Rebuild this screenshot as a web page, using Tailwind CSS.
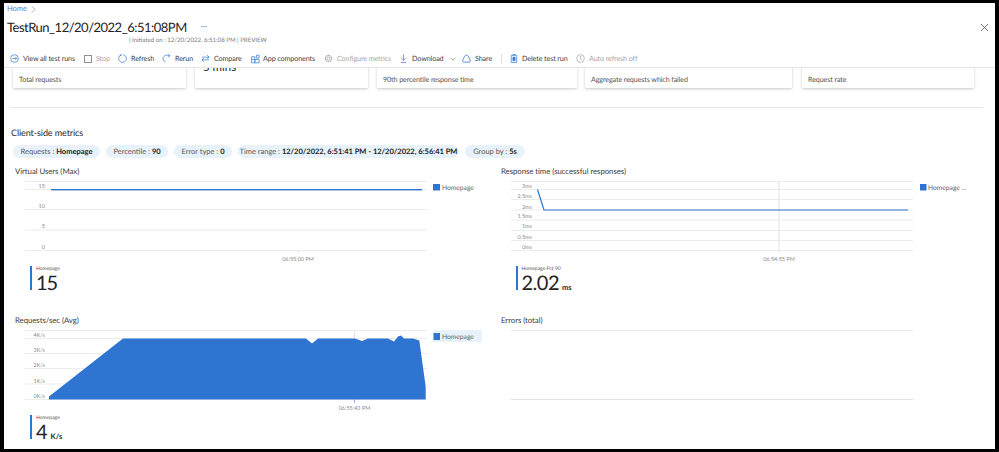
<!DOCTYPE html>
<html lang="en">
<head>
    <meta charset="UTF-8">
    <title>TestRun</title>
    <script src="https://cdn.jsdelivr.net/npm/@tailwindcss/browser@4"></script>
</head>
<body class="bg-black w-[999px] h-[452px] overflow-hidden font-['Lato',sans-serif] [text-rendering:geometricPrecision] text-[#323130]">
    <div class="ml-[4px] mt-[3px] w-[991px] h-[446px] bg-white overflow-hidden flex flex-col">
        <!-- Header -->
        <div class="h-[48px] shrink-0 relative">
            <div class="flex items-center gap-[4px] pl-[3px] h-[12px] text-[7.5px] text-[#4f83c9]">
                Home
                <svg class="w-[5px] h-[7px]" viewBox="0 0 5 7" fill="none" stroke="#8a8886" stroke-width=".7"><path d="M1 .5 4 3.5 1 6.5"/></svg>
            </div>
            <div class="flex items-center pl-[3px] h-[20px] mt-[2px]">
                <h1 class="text-[13px] leading-[20px] tracking-[-0.5px] text-[#252423]">TestRun_12/20/2022_6:51:08PM</h1>
                <span class="ml-[14px] text-[8px] text-[#777] -mt-[2px]">···</span>
            </div>
            <div class="pl-[125px] text-[6.1px] leading-[8px] text-[#7a7a7a]">| Initiated on : 12/20/2022, 6:51:08 PM | PREVIEW</div>
            <svg class="absolute left-[976px] top-[20px] w-[9px] h-[9px]" viewBox="0 0 9 9" fill="none" stroke="#555" stroke-width=".8"><path d="M1 1 8 8M8 1 1 8"/></svg>
        </div>

        <!-- Toolbar -->
        <div class="h-[17px] shrink-0 flex items-start pl-[6px] pt-[2px] text-[7.2px] tracking-[-0.12px] leading-[11px] text-[#444] border-b border-[#e6e6e6] relative z-10 bg-white">
            <div class="flex items-center gap-[4px] w-[74px]">
                <svg class="w-[9px] h-[9px] shrink-0" viewBox="0 0 10 10" fill="none" stroke="#3b7bd0" stroke-width=".8"><circle cx="5" cy="5" r="4.3"/><path d="M2.5 5h5M5.6 3 7.6 5 5.6 7"/></svg>
                <span>View all test runs</span>
            </div>
            <div class="flex items-center gap-[4px] w-[34px] text-[#a6a6a6]">
                <span class="w-[8px] h-[8px] border border-[#8f8f8f] shrink-0"></span>
                <span>Stop</span>
            </div>
            <div class="flex items-center gap-[4px] w-[44px]">
                <svg class="w-[9px] h-[9px] shrink-0" viewBox="0 0 10 10" fill="none" stroke="#3b7bd0" stroke-width=".8"><path d="M3.4 1A4.3 4.3 0 1 0 6 .8M3.6 .1V1.6H1.9"/></svg>
                <span>Refresh</span>
            </div>
            <div class="flex items-center gap-[4px] w-[39px]">
                <svg class="w-[9px] h-[9px] shrink-0" viewBox="0 0 10 10" fill="none" stroke="#3b7bd0" stroke-width=".8"><path d="M8.8 2.2C6.5.6 2.6 1 1.4 3.8c-.7 1.800.2 4 2.600 5M7 .3 8.900 2.200 6.800 3.500"/></svg>
                <span>Rerun</span>
            </div>
            <div class="flex items-center gap-[4px] w-[50px]">
                <svg class="w-[9px] h-[9px] shrink-0" viewBox="0 0 10 10" fill="none" stroke="#3b7bd0" stroke-width=".8"><path d="M1 3.500H9M6.800 1.200 9 3.500 6.800 5M9 6.500H1M3.200 4.800 1 6.500 3.200 8.800"/></svg>
                <span>Compare</span>
            </div>
            <div class="flex items-center gap-[3px] w-[73px]">
                <svg class="w-[9px] h-[10px] shrink-0" viewBox="0 0 10 10" fill="none" stroke="#3b7bd0" stroke-width=".8"><path d="M.7 2.500H4.300V9.300H.7ZM4.300 5.500H9V9.300H4.300ZM.7 5.500H4.300"/><path d="M6 .7H9V4H6Z"/></svg>
                <span>App components</span>
            </div>
            <div class="flex items-center gap-[4px] w-[76px] text-[#a6a6a6]">
                <svg class="w-[9px] h-[9px] shrink-0" viewBox="0 0 10 10" fill="none" stroke="#a6a6a6" stroke-width=".8"><circle cx="5" cy="5" r="1.500"/><circle cx="5" cy="5" r="3.400" stroke-dasharray="1.500 .6" stroke-width="1.500"/></svg>
                <span>Configure metrics</span>
            </div>
            <div class="flex items-center gap-[5px] w-[62px]">
                <svg class="w-[7px] h-[9px] shrink-0" viewBox="0 0 7 10" fill="none" stroke="#3b7bd0" stroke-width=".8"><path d="M3.500 .5V7M1 4.500 3.500 7 6 4.500M.5 9.300H6.500"/></svg>
                <span>Download</span>
                <svg class="w-[6px] h-[4px] ml-[1px] shrink-0" viewBox="0 0 6 4" fill="none" stroke="#666" stroke-width=".6"><path d="M.5 .7 3 3.300 5.500 .7"/></svg>
            </div>
            <div class="flex items-center gap-[4px] w-[39px]">
                <svg class="w-[9px] h-[9px] shrink-0" viewBox="0 0 10 10" fill="none" stroke="#3b7bd0" stroke-width=".9"><path d="M3 2.500A2.300 2.300 0 0 1 7 2.500L9.400 7.500A1.500 1.500 0 0 1 8 9H2A1.500 1.500 0 0 1 .6 7.500Z"/></svg>
                <span>Share</span>
            </div>
            <div class="w-[1px] h-[9px] bg-[#ddd] mr-[8px] mt-[1px]"></div>
            <div class="flex items-center gap-[4px] w-[66px]">
                <svg class="w-[8px] h-[9px] shrink-0" viewBox="0 0 8 10" fill="none" stroke="#3b7bd0" stroke-width=".8"><path d="M1 1.500H7V9.500H1ZM2.800 1.500V.5H5.200V1.500"/><path d="M2.800 3.500H5.200V7.500H2.800Z" fill="#3b7bd0"/></svg>
                <span>Delete test run</span>
            </div>
            <div class="flex items-center gap-[4px] text-[#a6a6a6]">
                <svg class="w-[9px] h-[9px] shrink-0" viewBox="0 0 10 10" fill="none" stroke="#a6a6a6" stroke-width=".8"><circle cx="5" cy="5" r="4.300"/><path d="M5 2.300V5.300L6.800 6.500"/></svg>
                <span>Auto refresh off</span>
            </div>
        </div>

        <!-- Scrolled content -->
        <div class="flex-1 overflow-hidden">
            <!-- Summary cards, scrolled under the toolbar -->
            <div class="flex pl-[9px] -mt-[20px] text-[7.2px] tracking-[-0.12px] text-[#555]">
                <div class="w-[173px] h-[40px] mr-[9px] rounded-[1px] shadow-[0_1px_3px_rgba(0,0,0,.22)] px-[6px] pt-[26px] leading-[11px]">Total requests</div>
                <div class="w-[173px] h-[40px] mr-[9px] rounded-[1px] shadow-[0_1px_3px_rgba(0,0,0,.22)] relative">
                    <span class="absolute left-[8px] top-[13px] text-[11.5px] tracking-normal leading-[14px] text-[#252423]">5 mins</span>
                </div>
                <div class="w-[200px] h-[40px] mr-[8px] rounded-[1px] shadow-[0_1px_3px_rgba(0,0,0,.22)] px-[6px] pt-[26px] leading-[11px]">90th percentile response time</div>
                <div class="w-[207px] h-[40px] mr-[10px] rounded-[1px] shadow-[0_1px_3px_rgba(0,0,0,.22)] px-[6px] pt-[26px] leading-[11px]">Aggregate requests which failed</div>
                <div class="w-[172px] h-[40px] rounded-[1px] shadow-[0_1px_3px_rgba(0,0,0,.22)] px-[6px] pt-[26px] leading-[11px]">Request rate</div>
            </div>

            <div class="ml-[6px] w-[973px] h-[1px] bg-[#e6e6e6] mt-[19px]"></div>

            <div class="pl-[7px] mt-[19px] text-[9px] tracking-[-0.1px] leading-[12px] font-medium text-[#3a3a3a]">Client-side metrics</div>

            <!-- Filter pills -->
            <div class="flex gap-[6px] pl-[9px] mt-[6px] text-[7.5px] leading-[13px] text-[#555]">
                <div class="w-[87px] h-[13px] rounded-full bg-[#e8f2fa] text-center">Requests : <b class="text-[#252423]">Homepage</b></div>
                <div class="w-[62px] h-[13px] rounded-full bg-[#e8f2fa] text-center">Percentile : <b class="text-[#252423]">90</b></div>
                <div class="w-[58px] h-[13px] rounded-full bg-[#e8f2fa] text-center">Error type : <b class="text-[#252423]">0</b></div>
                <div class="w-[221px] h-[13px] rounded-full bg-[#e8f2fa] text-center">Time range : <b class="text-[#252423]">12/20/2022, 6:51:41 PM - 12/20/2022, 6:56:41 PM</b></div>
                <div class="w-[60px] h-[13px] rounded-full bg-[#e8f2fa] text-center">Group by : <b class="text-[#252423]">5s</b></div>
            </div>

            <!-- Charts -->
            <div class="grid grid-cols-[486px_486px] grid-rows-[149px_120px] mt-[7px] pl-[6px]">
                <!-- Virtual users -->
                <div>
                    <div class="pl-[5px] h-[13px] text-[7.8px] tracking-[-0.05px] leading-[12px] text-[#3a3a3a]">Virtual Users (Max)</div>
                    <svg class="block w-[486px] h-[88px] text-[5.5px]" viewBox="0 0 486 88" fill="#8a8a8a">
                        <path d="M15 3.500H417M15 11.500H417M15 31.500H417M15 52H417M15 72.500H417" stroke="#ececec"/>
                        <text x="35" y="10" text-anchor="end">15</text>
                        <text x="35" y="30" text-anchor="end">10</text>
                        <text x="35" y="50" text-anchor="end">5</text>
                        <text x="35" y="71" text-anchor="end">0</text>
                        <rect x="41" y="11" width="371" height="1.400" fill="#2f74d0"/>
                        <path d="M288 72.500V74" stroke="#ccc"/>
                        <text x="288" y="83" text-anchor="middle">06:55:00 PM</text>
                        <rect x="423" y="6" width="7" height="6.500" fill="#2f74d0"/>
                        <text x="432" y="11.500" class="text-[6.7px]" fill="#666">Homepage</text>
                    </svg>
                    <div class="ml-[20px] flex h-[24px] border-l-[2.500px] border-[#2f74d0] pl-[4px] flex-col">
                        <span class="text-[5px] leading-[6px] text-[#555]">Homepage</span>
                        <span class="text-[20px] leading-[18px] mt-[2px] tracking-[-1px] text-[#252423]">15</span>
                    </div>
                </div>

                <!-- Response time -->
                <div>
                    <div class="pl-[5px] h-[13px] text-[7.8px] tracking-[-0.05px] leading-[12px] text-[#3a3a3a]">Response time (successful responses)</div>
                    <svg class="block w-[486px] h-[88px] text-[5.5px]" viewBox="0 0 486 88" fill="#8a8a8a">
                        <path d="M15 3.500H417M15 11.500H417M15 21.500H417M15 32H417M15 42H417M15 52.500H417M15 62.500H417M15 72.500H417" stroke="#ececec"/>
                        <text x="36" y="10" text-anchor="end">3ms</text>
                        <text x="36" y="20" text-anchor="end">2.5ms</text>
                        <text x="36" y="30.500" text-anchor="end">2ms</text>
                        <text x="36" y="40" text-anchor="end">1.5ms</text>
                        <text x="36" y="50" text-anchor="end">1ms</text>
                        <text x="36" y="60.500" text-anchor="end">0.5ms</text>
                        <text x="36" y="71" text-anchor="end">0ms</text>
                        <path d="M283 3V75" stroke="#e2e2e2"/>
                        <path d="M41.500 11.500 48 32H412" fill="none" stroke="#2f74d0" stroke-width="1.200"/>
                        <text x="283" y="83" text-anchor="middle">06:54:55 PM</text>
                        <rect x="424" y="6" width="6.500" height="6.500" fill="#2f74d0"/>
                        <text x="432" y="11.500" class="text-[6.7px]" fill="#666">Homepage ...</text>
                    </svg>
                    <div class="ml-[20px] flex h-[24px] border-l-[2.500px] border-[#2f74d0] pl-[3.500px] flex-col">
                        <span class="text-[5px] leading-[6px] text-[#555]">Homepage Pct 90</span>
                        <div class="flex items-baseline gap-[3px] mt-[2px] text-[#252423]">
                            <span class="text-[20px] leading-[18px] tracking-[-0.5px]">2.02</span>
                            <span class="text-[7.5px] leading-[8px] font-bold">ms</span>
                        </div>
                    </div>
                </div>

                <!-- Requests per second -->
                <div>
                    <div class="pl-[5px] h-[13px] text-[7.8px] tracking-[-0.05px] leading-[12px] text-[#3a3a3a]">Requests/sec (Avg)</div>
                    <svg class="block w-[486px] h-[88px] text-[5.5px]" viewBox="0 0 486 88" fill="#8a8a8a">
                        <path d="M15 3.500H417M15 11.500H417M15 26.500H417M15 41.500H417M15 57H417M15 72.500H417" stroke="#ececec"/>
                        <text x="35" y="10" text-anchor="end">4K/s</text>
                        <text x="35" y="25" text-anchor="end">3K/s</text>
                        <text x="35" y="40" text-anchor="end">2K/s</text>
                        <text x="35" y="55.500" text-anchor="end">1K/s</text>
                        <text x="35" y="71" text-anchor="end">0K/s</text>
                        <path d="M344.500 3.500V12" stroke="#e2e2e2"/>
                        <path d="M39 72.500V69.500L113 11.500H296L302 16.500 308 11.500H345L352 14 358 11.500H378L384 14.500 388 9.500 391 8.500 394 11.500H403L409.300 13.500 415.700 59.700V72.500Z" fill="#2f74d0"/>
                        <path d="M344.500 72.500V76" stroke="#8db4e6"/>
                        <text x="344.500" y="83" text-anchor="middle">06:55:43 PM</text>
                        <rect x="423" y="3" width="49" height="12" fill="#e8f2fa"/>
                        <rect x="423.500" y="6" width="6.500" height="7" fill="#2f74d0"/>
                        <text x="432" y="11.500" class="text-[6.7px]" fill="#666">Homepage</text>
                    </svg>
                    <div class="ml-[20px] flex h-[24px] border-l-[2.500px] border-[#2f74d0] pl-[4px] flex-col">
                        <span class="text-[5px] leading-[6px] text-[#555]">Homepage</span>
                        <div class="flex items-baseline gap-[3px] mt-[2px] text-[#252423]">
                            <span class="text-[20px] leading-[18px]">4</span>
                            <span class="text-[7.5px] leading-[8px] font-bold">K/s</span>
                        </div>
                    </div>
                </div>

                <!-- Errors, no data -->
                <div>
                    <div class="pl-[5px] h-[13px] text-[7.8px] tracking-[-0.05px] leading-[12px] text-[#3a3a3a]">Errors (total)</div>
                    <svg class="block w-[486px] h-[88px]" viewBox="0 0 486 88">
                        <path d="M15 3.500H417" stroke="#ececec"/>
                        <path d="M15 72.500H417" stroke="#e2e2e2"/>
                    </svg>
                </div>
            </div>
        </div>
    </div>
</body>
</html>
